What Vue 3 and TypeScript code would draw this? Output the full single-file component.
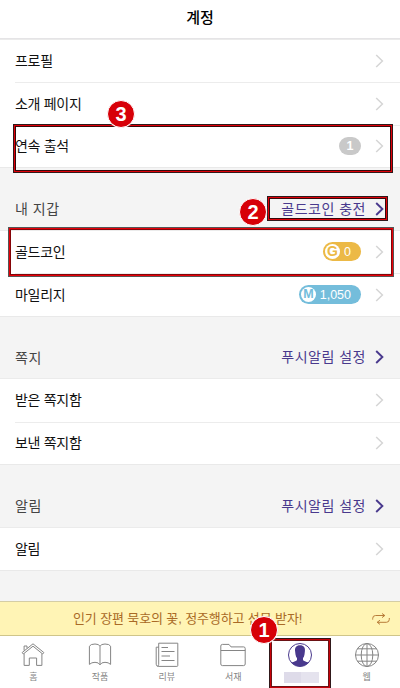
<script setup lang="ts">
interface Row { label: string; badge?: 'count' | 'gold' | 'mile'; letter?: string; value?: string }
interface Section { title?: string; action?: string; rows: Row[] }

const sections: Section[] = [
  { rows: [{ label: '프로필' }, { label: '소개 페이지' }, { label: '연속 출석', badge: 'count', value: '1' }] },
  {
    title: '내 지갑', action: '골드코인 충전',
    rows: [
      { label: '골드코인', badge: 'gold', letter: 'G', value: '0' },
      { label: '마일리지', badge: 'mile', letter: 'M', value: '1,050' },
    ],
  },
  { title: '쪽지', action: '푸시알림 설정', rows: [{ label: '받은 쪽지함' }, { label: '보낸 쪽지함' }] },
  { title: '알림', action: '푸시알림 설정', rows: [{ label: '알림' }] },
]
</script>

<template>
  <div class="screen">
    <header class="top">계정</header>
    <main class="content">
      <section v-for="(s, i) in sections" :key="i">
        <div v-if="s.title" class="section-head">
          <span class="title">{{ s.title }}</span>
          <a class="action"><span>{{ s.action }}</span>
            <svg class="chev" viewBox="0 0 9 14"><path d="M1.2 1 7.4 7 1.2 13" /></svg>
          </a>
        </div>
        <div class="rows">
          <div v-for="r in s.rows" :key="r.label" class="row">
            <span class="label">{{ r.label }}</span>
            <span v-if="r.badge" class="badge" :class="r.badge">
              <b v-if="r.letter">{{ r.letter }}</b><span>{{ r.value }}</span>
            </span>
            <svg class="chev" viewBox="0 0 9 14"><path d="M1.2 1 7.4 7 1.2 13" /></svg>
          </div>
        </div>
      </section>
    </main>
    <div class="banner">
      <span>인기 장편 묵호의 꽃, 정주행하고 선물 받자!</span>
      <svg class="repeat" viewBox="0 0 18 12"><path d="M.7 6.6V5.4Q.7 2.5 3.6 2.5H12.7M10 .5 12.8 2.5 10 4.6M17.3 5V6.4Q17.3 9.3 14.4 9.3H5.2M8 7.2 5.2 9.3 8 11.4" /></svg>
    </div>
    <nav class="tabs">
      <a class="tab">
        <svg viewBox="0 0 26 26"><path d="M2.2 10.5 13 1.8 23.8 10.5 22.7 12 13 4.2 3.3 12ZM4.1 11.6V23.4H9.3V16H16.6V23.4H21.9V11.6M4.1 8.5V4H7V6.3" /></svg>
        <span>홈</span>
      </a>
      <a class="tab">
        <svg viewBox="0 0 26 26"><path d="M13 4.2Q11.8 2 8 2 3.6 2 2.4 4.2V22.4Q4.6 20.3 8 20.3 11.8 20.3 13 22.8 14.2 20.3 18 20.3 21.4 20.3 23.6 22.4V4.2Q22.4 2 18 2 14.2 2 13 4.2V22.8" /></svg>
        <span>작품</span>
      </a>
      <a class="tab">
        <svg viewBox="0 0 26 26"><path d="M4.7 1.2H23.8V23.5Q23.8 24.4 22.9 24.4H4.2Q2.2 24.2 2.2 22.2V5.2H4.7M4.7 1.2V22.3Q4.7 24.2 3.4 24.1M7.5 5.5H14M7.5 9.5H20.5M7.5 14H16M7.5 18.5H20.5" /></svg>
        <span>리뷰</span>
      </a>
      <a class="tab">
        <svg viewBox="0 0 26 26"><path d="M.8 22V4Q.8 2.4 2.4 2.4H9L11 4.9H23.6Q25.2 4.9 25.2 6.5V22Q25.2 23.6 23.6 23.6H2.4Q.8 23.6 .8 22ZM.8 8.5H25.2" /></svg>
        <span>서재</span>
      </a>
      <a class="tab">
        <svg class="person" viewBox="0 0 26 26">
          <circle cx="13" cy="13" r="11.5" />
          <path d="M13 3.3C9.2 3.3 7.6 5.7 8.1 9.2L8.5 12.4Q8.9 14.8 10 16V18Q9 19.4 4.2 20.6Q8 24.6 13 24.6T21.8 20.6Q17 19.4 16 18V16Q17.1 14.8 17.5 12.4L17.9 9.2C18.4 5.7 16.8 3.3 13 3.3Z" />
        </svg>
        <span class="mask"><i></i><i></i></span>
      </a>
      <a class="tab">
        <svg viewBox="0 0 26 26"><circle cx="13" cy="13" r="11.5" /><ellipse cx="13" cy="13" rx="5.8" ry="11.5" /><path d="M13 1.5V24.5M1.5 13H24.5M3.3 6.8H22.7M3.3 19.2H22.7" /></svg>
        <span>웹</span>
      </a>
    </nav>
    <div class="mark attendance"></div>
    <div class="mark charge"></div>
    <div class="mark coin"></div>
    <div class="mark account"></div>
    <div class="step s3">3</div>
    <div class="step s2">2</div>
    <div class="step s1">1</div>
  </div>
</template>

<style>
body { margin: 0; }
</style>

<style scoped>
.screen { position: relative; width: 400px; height: 688px; overflow: hidden; display: flex; flex-direction: column; background: #f4f4f4; font-family: "Liberation Sans", "Noto Sans CJK KR", sans-serif; color: #111; }
.top { box-sizing: border-box; height: 39.6px; border-bottom: 2px solid #e5e4e6; background: #fff; text-align: center; font: 500 15px/33px "Noto Sans CJK KR", sans-serif; color: #000; }
.content { flex: 1; }
.section-head { height: 63.5px; box-sizing: border-box; padding: 20px 16px 0 15px; display: flex; align-items: center; justify-content: space-between; font-size: 14px; letter-spacing: .5px; color: #444; }
.title { padding-bottom: 1px; }
.action { display: flex; align-items: center; gap: 9px; color: #49398d; }
.action span { padding-bottom: 2px; }
.chev { width: 9px; height: 14px; fill: none; stroke: #d5d5d5; stroke-width: 1.5; flex: none; }
.action .chev { stroke: #49398d; stroke-width: 1.9; }
.rows { background: #fff; box-shadow: 0 -1px #ebebeb, 0 1px #e9e9e9; }
.row { height: 42.5px; box-sizing: border-box; padding-right: 16px; display: flex; align-items: center; font-size: 14px; letter-spacing: -.3px; margin-left: 15px; }
.row + .row { border-top: 1px solid #ececec; }
.label { flex: 1; padding-bottom: 2px; }
.badge { box-sizing: border-box; display: flex; align-items: center; justify-content: space-between; height: 19px; border-radius: 10px; color: #fff; margin-right: 14px; font-size: 12.5px; letter-spacing: 0; padding: 0 10px 0 2px; }
.badge span { padding-top: 1px; }
.badge b { width: 15px; height: 15px; line-height: 15px; border-radius: 50%; background: #fff; text-align: center; font-size: 14px; }
.count { width: 22px; height: 18px; background: #c9c9c9; justify-content: center; padding: 0; font-weight: bold; }
.count span { padding: 0; }
.gold { width: 38px; background: #ecb946; }
.gold b { color: #ecb946; }
.mile { width: 62px; background: #74bddb; }
.mile b { color: #74bddb; font-size: 12.5px; }
.banner { box-sizing: border-box; height: 35px; border-top: 1px solid #d5cda5; border-bottom: 1px solid #cfc58a; background: #fff4b5; color: #a96a26; display: flex; align-items: center; padding: 0 10px 0 73px; justify-content: space-between; font-size: 13px; letter-spacing: -.12px; }
.banner span { padding-bottom: 2px; }
.repeat { width: 18px; height: 12px; fill: none; stroke: #b87c3a; stroke-width: 1; }
.tabs { height: 52px; background: #fff; display: grid; grid-template-columns: repeat(6, 1fr); }
.tab { display: flex; flex-direction: column; align-items: center; padding-top: 6px; font-size: 9px; line-height: 14px; color: #858585; gap: 2px; }
.tab svg { width: 26px; height: 26px; fill: none; stroke: #858585; stroke-width: 1; }
.tab .person { stroke: #49398d; }
.person path { fill: #49398d; stroke: none; }
.mask { display: flex; width: 35px; height: 11px; margin-top: 2px; margin-left: 3px; }
.mask i { width: 17px; background: #dedbe9; }
.mask i + i { width: 18px; background: #e5e3ee; }
.mark { position: absolute; box-sizing: border-box; border: 1px solid #30181a; box-shadow: inset 0 0 0 1px #e00008, inset 0 0 0 2px #35080b; }
.attendance { left: 13px; top: 124px; width: 380px; height: 49px; }
.charge { left: 267px; top: 196px; width: 121px; height: 25px; }
.coin { left: 8px; top: 227px; width: 386px; height: 50px; border-color: #555; box-shadow: inset 0 0 0 1px #e80008, inset 0 0 0 2px #850408; }
.account { left: 269px; top: 638px; width: 62px; height: 51px; box-shadow: inset 0 0 0 1px #c80008, inset 0 0 0 2px #6a1215; }
.step { position: absolute; box-sizing: border-box; width: 28px; height: 28px; border: 1px solid #fff; border-radius: 50%; background: #d70008; color: #fff; text-align: center; font: bold 20px/26px "Liberation Sans", sans-serif; box-shadow: 0 0 1px #fff; }
.s3 { left: 107px; top: 100px; }
.s2 { left: 239px; top: 198px; }
.s1 { left: 250px; top: 616px; }
</style>
